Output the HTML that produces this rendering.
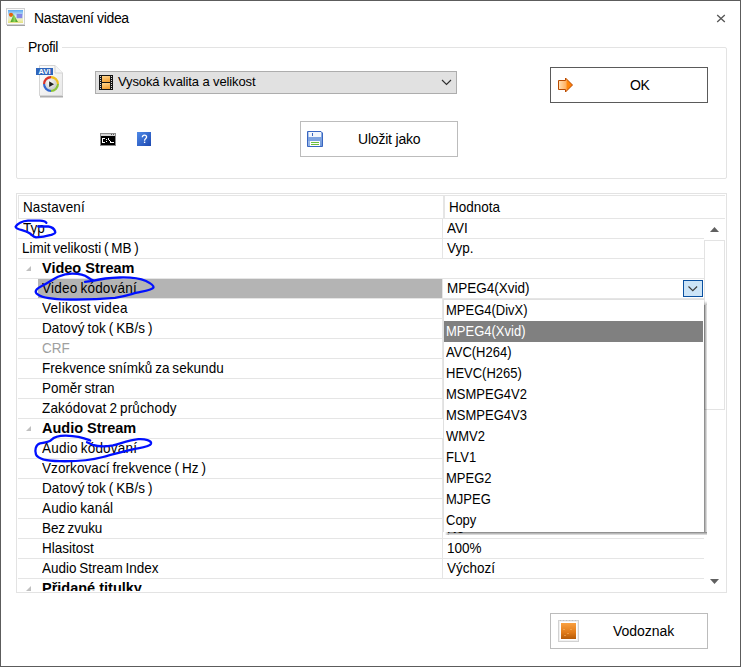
<!DOCTYPE html>
<html><head><meta charset="utf-8">
<style>
*{margin:0;padding:0;box-sizing:border-box}
html,body{width:741px;height:667px;overflow:hidden;background:#fff}
body{position:relative;font-family:"Liberation Sans",sans-serif;font-size:13px;color:#000}
.a{position:absolute}
.t{position:absolute;white-space:pre;line-height:16px;height:16px}
.hl{position:absolute;height:1px;background:#e5e5e5}
.vl{position:absolute;width:1px;background:#e5e5e5}
.btn{position:absolute;border:1px solid #bcbcbc;background:#fff}
.g{font-size:13.5px;word-spacing:-1px;transform:scaleY(1.09);transform-origin:0 12.7px}
.gb{font-size:14.5px;font-weight:700}
.dd{transform:scaleY(1.09);transform-origin:0 12.5px}
</style></head><body>
<!-- window border -->
<div class="a" style="left:0;top:0;width:741px;height:667px;border:1px solid #5c5c5c"></div>

<!-- title icon -->
<svg class="a" style="left:6px;top:8px" width="20" height="19" viewBox="0 0 20 19">
  <defs>
    <linearGradient id="sky" x1="0" y1="0" x2="0" y2="1"><stop offset="0" stop-color="#5aa8f0"/><stop offset="0.45" stop-color="#d8ecf6"/><stop offset="0.75" stop-color="#eef0b8"/><stop offset="1" stop-color="#e4e080"/></linearGradient>
    <linearGradient id="mt" x1="0" y1="0" x2="1" y2="0"><stop offset="0" stop-color="#3c9a1c"/><stop offset="0.55" stop-color="#8ed45a"/><stop offset="1" stop-color="#2e8812"/></linearGradient>
  </defs>
  <rect x="1" y="16" width="18" height="2" fill="#8c8c8c" opacity="0.8"/>
  <rect x="0.5" y="0.5" width="18" height="16" fill="#fafafa" stroke="#d0d0d0"/>
  <rect x="2" y="2" width="15" height="13" fill="url(#sky)"/>
  <rect x="10.6" y="5.9" width="5.7" height="4.3" fill="#7c7ce6" opacity="0.9"/>
  <circle cx="5" cy="6.8" r="2.1" fill="#e2620c"/>
  <path d="M4.5 14 L7.7 5.9 L11.8 14 Z" fill="url(#mt)"/>
</svg>
<div class="t" style="left:34px;top:10px;font-size:14px;letter-spacing:-0.38px">Nastavení videa</div>

<!-- close -->
<svg class="a" style="left:716px;top:14px" width="10" height="9" viewBox="0 0 10 9">
  <path d="M1.2 1 L8.8 8 M8.8 1 L1.2 8" stroke="#555" stroke-width="1.3"/>
</svg>

<!-- group box -->
<div class="a" style="left:16px;top:47px;width:711px;height:132px;border:1px solid #e3e3e3;border-radius:2px"></div>
<div class="a" style="left:24px;top:40px;width:38px;height:14px;background:#fff"></div>
<div class="t" style="left:28px;top:39px;font-size:14px;letter-spacing:-0.3px">Profil</div>

<!-- AVI icon -->
<svg class="a" style="left:35px;top:64px" width="30" height="34" viewBox="0 0 30 34">
  <defs>
    <linearGradient id="pg" x1="0" y1="0" x2="1" y2="1"><stop offset="0" stop-color="#fdfdfd"/><stop offset="1" stop-color="#e8e8e8"/></linearGradient>
    <radialGradient id="cc" cx="0.4" cy="0.35" r="0.7"><stop offset="0" stop-color="#ffffff"/><stop offset="1" stop-color="#c4c4c4"/></radialGradient>
  </defs>
  <rect x="5" y="31.5" width="23" height="2" fill="#9a9a9a" opacity="0.8"/>
  <path d="M4.5 1.5 H20 L27.5 9 V31.5 H4.5 Z" fill="url(#pg)" stroke="#d4d4d4"/>
  <path d="M20 1.5 V9 H27.5" fill="#f6f6f6" stroke="#d4d4d4"/>
  <rect x="1" y="4" width="17" height="7" fill="#2f66bc"/>
  <text x="9.5" y="10.3" font-family="Liberation Sans" font-weight="700" font-size="7.5" fill="#fff" text-anchor="middle">AVI</text>
  <circle cx="16" cy="20" r="6.8" fill="none" stroke="#d8322a" stroke-width="2.4" stroke-dasharray="10.68 32.05" transform="rotate(180 16 20)"/>
  <circle cx="16" cy="20" r="6.8" fill="none" stroke="#f0c020" stroke-width="2.4" stroke-dasharray="10.68 32.05" transform="rotate(270 16 20)"/>
  <circle cx="16" cy="20" r="6.8" fill="none" stroke="#8cc43a" stroke-width="2.4" stroke-dasharray="10.68 32.05" transform="rotate(0 16 20)"/>
  <circle cx="16" cy="20" r="6.8" fill="none" stroke="#3266d0" stroke-width="2.4" stroke-dasharray="10.68 32.05" transform="rotate(90 16 20)"/>
  <circle cx="16" cy="20" r="5.6" fill="url(#cc)"/>
  <path d="M14.2 17.3 L19 20.2 L14.2 23 Z" fill="#1e1e1e"/>
</svg>

<!-- combo -->
<div class="a" style="left:95px;top:71px;width:362px;height:23px;background:#e1e1e1;border:1px solid #adadad"></div>
<svg class="a" style="left:99px;top:75px" width="14" height="15" viewBox="0 0 14 15" shape-rendering="crispEdges">
  <defs><linearGradient id="fr" x1="0" y1="0" x2="0.3" y2="1"><stop offset="0" stop-color="#ffd690"/><stop offset="1" stop-color="#f0a23a"/></linearGradient></defs>
  <rect x="0" y="0" width="14" height="15" fill="#151515"/>
  <rect x="3" y="1" width="8" height="6" fill="url(#fr)"/>
  <rect x="3" y="8" width="8" height="6" fill="url(#fr)"/>
  <g fill="#d8d8d8"><rect x="1" y="1" width="1" height="1"/><rect x="1" y="3" width="1" height="1"/><rect x="1" y="5" width="1" height="1"/><rect x="1" y="7" width="1" height="1"/><rect x="1" y="9" width="1" height="1"/><rect x="1" y="11" width="1" height="1"/><rect x="1" y="13" width="1" height="1"/>
  <rect x="12" y="1" width="1" height="1"/><rect x="12" y="3" width="1" height="1"/><rect x="12" y="5" width="1" height="1"/><rect x="12" y="7" width="1" height="1"/><rect x="12" y="9" width="1" height="1"/><rect x="12" y="11" width="1" height="1"/><rect x="12" y="13" width="1" height="1"/></g>
</svg>
<div class="t" style="left:118px;top:74px;letter-spacing:-0.12px">Vysoká kvalita a velikost</div>
<svg class="a" style="left:440px;top:78px" width="12" height="9" viewBox="0 0 12 9"><path d="M2 2 L6.5 6.5 L11 2" fill="none" stroke="#2e2e2e" stroke-width="1.15"/></svg>

<!-- cmd icon -->
<svg class="a" style="left:100px;top:133px" width="16" height="13" viewBox="0 0 16 13" shape-rendering="crispEdges">
  <rect x="0" y="0" width="16" height="13" fill="#8c8c8c"/>
  <rect x="1" y="1" width="14" height="2" fill="#d4d4d4"/>
  <rect x="11" y="1" width="1" height="1" fill="#555"/><rect x="12" y="1" width="1" height="1" fill="#d4d4d4"/><rect x="13" y="1" width="1" height="1" fill="#555"/>
  <rect x="1" y="3" width="14" height="9" fill="#000"/>
  <g fill="#fff">
  <rect x="2" y="5" width="3" height="1"/><rect x="2" y="6" width="1" height="3"/><rect x="2" y="9" width="3" height="1"/>
  <rect x="6" y="6" width="1" height="1"/><rect x="6" y="8" width="1" height="1"/>
  <rect x="8" y="5" width="1" height="2"/><rect x="9" y="7" width="1" height="1"/><rect x="10" y="8" width="1" height="2"/>
  <rect x="11" y="9" width="3" height="1"/>
  </g>
</svg>
<!-- help icon -->
<svg class="a" style="left:137px;top:132px" width="14" height="14" viewBox="0 0 14 14">
  <defs><linearGradient id="hb" x1="0" y1="0" x2="1" y2="1"><stop offset="0" stop-color="#4f8ae8"/><stop offset="1" stop-color="#1c48b0"/></linearGradient></defs>
  <rect x="0" y="0" width="14" height="14" fill="url(#hb)"/>
  <path d="M5.3 5.3 C5.3 3.9, 6.3 3.1, 7.4 3.1 C8.6 3.1, 9.6 3.9, 9.6 5.1 C9.6 6.4, 7.8 6.8, 7.6 8 L7.6 8.7" fill="none" stroke="#fff" stroke-width="1.3"/><rect x="6.9" y="9.6" width="1.4" height="1.4" fill="#fff"/>
</svg>

<!-- OK button -->
<div class="a" style="left:550px;top:67px;width:158px;height:36px;border:1px solid #5a5a5a;background:#fff"></div>
<svg class="a" style="left:557px;top:77px" width="17" height="16" viewBox="0 0 17 16">
  <defs><linearGradient id="ar" x1="0" y1="0" x2="1" y2="0"><stop offset="0" stop-color="#ffe2b8"/><stop offset="0.55" stop-color="#ffb060"/><stop offset="0.6" stop-color="#ff8a10"/><stop offset="1" stop-color="#ff7a00"/></linearGradient></defs>
  <path d="M1.5 3.5 H8.5 V1 L15.5 8 L8.5 15 V12.5 H1.5 Z" fill="url(#ar)" stroke="#b84a00" stroke-width="1"/>
</svg>
<div class="t" style="left:630px;top:77px;font-size:14px;letter-spacing:-0.5px">OK</div>

<!-- Ulozit jako -->
<div class="btn" style="left:300px;top:121px;width:158px;height:36px"></div>
<svg class="a" style="left:307px;top:131px" width="16" height="16" viewBox="0 0 16 16" shape-rendering="crispEdges">
  <defs><linearGradient id="fl" x1="0" y1="0" x2="1" y2="1"><stop offset="0" stop-color="#b8cff2"/><stop offset="1" stop-color="#6a94d8"/></linearGradient></defs>
  <path d="M0.5 0.5 H14 L15.5 2 V15.5 H0.5 Z" fill="url(#fl)" stroke="#3a66c0" shape-rendering="auto"/>
  <rect x="2" y="1" width="12" height="5" fill="#f2f6fc"/>
  <rect x="5" y="2" width="1" height="3" fill="#3a66c0"/>
  <rect x="1" y="6" width="14" height="4" fill="#7ea3e0"/>
  <rect x="3" y="10" width="10" height="5" fill="#fdfdfd"/>
  <rect x="4" y="11" width="8" height="1" fill="#6cbf3c"/>
  <rect x="4" y="13" width="8" height="1" fill="#6cbf3c"/>
</svg>
<div class="t" style="left:358px;top:131px;font-size:14px;letter-spacing:-0.2px">Uložit jako</div>

<!-- Vodoznak -->
<div class="btn" style="left:550px;top:613px;width:158px;height:36px"></div>
<svg class="a" style="left:558px;top:620px" width="21" height="22" viewBox="0 0 21 22">
  <defs><linearGradient id="vg" x1="0" y1="0" x2="0" y2="1"><stop offset="0" stop-color="#f9a040"/><stop offset="0.6" stop-color="#e07a18"/><stop offset="1" stop-color="#b45a08"/></linearGradient></defs>
  <rect x="0" y="0" width="21" height="22" fill="#d2d2d2"/>
  <rect x="1" y="1" width="19" height="20" fill="#f0f0f0"/>
  <g fill="#bdbdbd"><rect x="2" y="0" width="1" height="1"/><rect x="5" y="0" width="1" height="1"/><rect x="8" y="0" width="1" height="1"/><rect x="11" y="0" width="1" height="1"/><rect x="14" y="0" width="1" height="1"/><rect x="17" y="0" width="1" height="1"/></g>
  <rect x="2" y="2" width="17" height="18" fill="#ffffff"/>
  <rect x="3" y="3" width="15" height="16" fill="url(#vg)"/>
  <g fill="#f7b060" opacity="0.6"><rect x="5" y="9" width="2" height="1"/><rect x="12" y="9" width="2" height="1"/><rect x="9" y="13" width="2" height="1"/><rect x="6" y="15" width="2" height="1"/></g>
</svg>
<div class="t" style="left:613px;top:623px;font-size:14px;letter-spacing:-0.05px">Vodoznak</div>

<!-- property grid -->
<div class="a" style="left:16px;top:193px;width:711px;height:400px;border:1px solid #e3e3e3"></div>
<!--GRID-->
<div class="hl" style="left:18px;top:195px;width:707px"></div>
<div class="hl" style="left:18px;top:218px;width:707px"></div>
<div class="vl" style="left:18px;top:195px;height:24px"></div>
<div class="vl" style="left:443px;top:195px;height:23px;width:2px"></div>
<div class="t g" style="left:23px;top:200px;letter-spacing:0.12px">Nastavení</div>
<div class="t g" style="left:449px;top:200px">Hodnota</div>
<div class="a" style="left:18px;top:219px;width:707px;height:372px;overflow:hidden">
<div class="t g" style="left:5px;top:2px">Typ</div>
<div class="vl" style="left:424px;top:0px;height:19px"></div>
<div class="t g" style="left:429px;top:2px">AVI</div>
<div class="hl" style="left:0;top:19px;width:686px"></div>
<div class="t g" style="left:4px;top:22px">Limit velikosti ( MB )</div>
<div class="vl" style="left:424px;top:20px;height:19px"></div>
<div class="t g" style="left:429px;top:22px">Vyp.</div>
<div class="hl" style="left:0;top:39px;width:686px"></div>
<svg class="a" style="left:8px;top:47px" width="6" height="6" viewBox="0 0 6 6"><path d="M0 5 L5 0 L5 5 Z" fill="#c0c0c0"/></svg>
<div class="t gb" style="left:24px;top:41px">Video Stream</div>
<div class="hl" style="left:0;top:59px;width:686px"></div>
<div class="a" style="left:20px;top:60px;width:404px;height:19px;background:#b4b4b4"></div>
<div class="t g" style="left:24px;top:62px;letter-spacing:0.23px">Video kódování</div>
<div class="vl" style="left:424px;top:60px;height:19px"></div>
<div class="t g" style="left:429px;top:62px">MPEG4(Xvid)</div>
<div class="hl" style="left:0;top:79px;width:686px"></div>
<div class="t g" style="left:24px;top:82px;letter-spacing:0.3px">Velikost videa</div>
<div class="vl" style="left:424px;top:80px;height:19px"></div>
<div class="hl" style="left:0;top:99px;width:686px"></div>
<div class="t g" style="left:24px;top:102px;letter-spacing:0.11px">Datový tok ( KB/s )</div>
<div class="vl" style="left:424px;top:100px;height:19px"></div>
<div class="hl" style="left:0;top:119px;width:686px"></div>
<div class="t g" style="left:24px;top:122px;color:#a0a0a0">CRF</div>
<div class="vl" style="left:424px;top:120px;height:19px"></div>
<div class="hl" style="left:0;top:139px;width:686px"></div>
<div class="t g" style="left:24px;top:142px;letter-spacing:0.065px">Frekvence snímků za sekundu</div>
<div class="vl" style="left:424px;top:140px;height:19px"></div>
<div class="hl" style="left:0;top:159px;width:686px"></div>
<div class="t g" style="left:24px;top:162px">Poměr stran</div>
<div class="vl" style="left:424px;top:160px;height:19px"></div>
<div class="hl" style="left:0;top:179px;width:686px"></div>
<div class="t g" style="left:24px;top:182px;letter-spacing:0.16px">Zakódovat 2 průchody</div>
<div class="vl" style="left:424px;top:180px;height:19px"></div>
<div class="hl" style="left:0;top:199px;width:686px"></div>
<svg class="a" style="left:8px;top:207px" width="6" height="6" viewBox="0 0 6 6"><path d="M0 5 L5 0 L5 5 Z" fill="#c0c0c0"/></svg>
<div class="t gb" style="left:24px;top:201px">Audio Stream</div>
<div class="hl" style="left:0;top:219px;width:686px"></div>
<div class="t g" style="left:24px;top:222px;letter-spacing:0.23px">Audio kódování</div>
<div class="vl" style="left:424px;top:220px;height:19px"></div>
<div class="hl" style="left:0;top:239px;width:686px"></div>
<div class="t g" style="left:24px;top:242px;letter-spacing:0.08px">Vzorkovací frekvence ( Hz )</div>
<div class="vl" style="left:424px;top:240px;height:19px"></div>
<div class="hl" style="left:0;top:259px;width:686px"></div>
<div class="t g" style="left:24px;top:262px;letter-spacing:0.11px">Datový tok ( KB/s )</div>
<div class="vl" style="left:424px;top:260px;height:19px"></div>
<div class="hl" style="left:0;top:279px;width:686px"></div>
<div class="t g" style="left:24px;top:282px;letter-spacing:0.15px">Audio kanál</div>
<div class="vl" style="left:424px;top:280px;height:19px"></div>
<div class="hl" style="left:0;top:299px;width:686px"></div>
<div class="t g" style="left:24px;top:302px;letter-spacing:-0.12px">Bez zvuku</div>
<div class="vl" style="left:424px;top:300px;height:19px"></div>
<div class="t g" style="left:429px;top:302px">Ne</div>
<div class="hl" style="left:0;top:319px;width:686px"></div>
<div class="t g" style="left:24px;top:322px">Hlasitost</div>
<div class="vl" style="left:424px;top:320px;height:19px"></div>
<div class="t g" style="left:429px;top:322px">100%</div>
<div class="hl" style="left:0;top:339px;width:686px"></div>
<div class="t g" style="left:24px;top:342px">Audio Stream Index</div>
<div class="vl" style="left:424px;top:340px;height:19px"></div>
<div class="t g" style="left:429px;top:342px">Výchozí</div>
<div class="hl" style="left:0;top:359px;width:686px"></div>
<svg class="a" style="left:8px;top:367px" width="6" height="6" viewBox="0 0 6 6"><path d="M0 5 L5 0 L5 5 Z" fill="#c0c0c0"/></svg>
<div class="t gb" style="left:24px;top:361px">Přidané titulky</div>
<div class="hl" style="left:0;top:379px;width:686px"></div>
</div>
<!--/GRID-->

<!--DROP-->
<!-- scrollbar -->
<svg class="a" style="left:709px;top:226px" width="11" height="7" viewBox="0 0 11 7"><path d="M1 6 L5.5 1 L10 6 Z" fill="#606060"/></svg>
<div class="a" style="left:704px;top:240px;width:21px;height:170px;border:1px solid #e3e3e3;background:#fff"></div>
<svg class="a" style="left:709px;top:578px" width="11" height="7" viewBox="0 0 11 7"><path d="M1 1 L5.5 6 L10 1 Z" fill="#606060"/></svg>
<!-- combo btn in row -->
<div class="a" style="left:683px;top:280px;width:20px;height:17px;border:1px solid #0a50a0;background:#cce4f7"></div>
<svg class="a" style="left:687px;top:284px" width="12" height="9" viewBox="0 0 12 9"><path d="M1.5 2.5 L5.8 6.6 L10.1 2.5" fill="none" stroke="#3a3a3a" stroke-width="1.15"/></svg>
<!-- dropdown -->
<div class="a" style="left:704px;top:305px;width:3px;height:227px;background:linear-gradient(to right,rgba(0,0,0,.5),rgba(0,0,0,.28) 50%,rgba(0,0,0,.09))"></div>
<div class="a" style="left:704px;top:301px;width:3px;height:4px;background:linear-gradient(to bottom,rgba(255,255,255,0),rgba(128,128,128,0.5))"></div>
<div class="a" style="left:449px;top:532px;width:258px;height:3px;background:linear-gradient(to bottom,rgba(0,0,0,.5),rgba(0,0,0,.28) 50%,rgba(0,0,0,.09))"></div>
<div class="a" style="left:445px;top:532px;width:4px;height:3px;background:linear-gradient(to right,rgba(0,0,0,0),rgba(0,0,0,.35))"></div>
<div class="a" style="left:443px;top:299px;width:261px;height:233px;border:1px solid #e0e0e0;border-right:none;border-bottom:none;background:#fff"></div>
<div class="a" style="left:444px;top:321px;width:259px;height:21px;background:#808080"></div>
<div class="t dd" style="left:446px;top:303px;color:#000">MPEG4(DivX)</div>
<div class="t dd" style="left:446px;top:324px;color:#fff">MPEG4(Xvid)</div>
<div class="t dd" style="left:446px;top:345px;color:#000">AVC(H264)</div>
<div class="t dd" style="left:446px;top:366px;color:#000">HEVC(H265)</div>
<div class="t dd" style="left:446px;top:387px;color:#000">MSMPEG4V2</div>
<div class="t dd" style="left:446px;top:408px;color:#000">MSMPEG4V3</div>
<div class="t dd" style="left:446px;top:429px;color:#000">WMV2</div>
<div class="t dd" style="left:446px;top:450px;color:#000">FLV1</div>
<div class="t dd" style="left:446px;top:471px;color:#000">MPEG2</div>
<div class="t dd" style="left:446px;top:492px;color:#000">MJPEG</div>
<div class="t dd" style="left:446px;top:513px;color:#000">Copy</div>
<!--/DROP-->
<!--ANN-->
<svg class="a" style="left:0;top:0" width="741" height="667" viewBox="0 0 741 667">
<g fill="none" stroke="#0010ff" stroke-width="2.3" stroke-linecap="round" stroke-linejoin="round">
<path d="M46.4 222.8 C45.5 221.5, 43 220.7, 40 220.7 L28 220.7 C22 221, 17 224, 15.6 226.8 C15.6 228, 19 229.5, 22 230.2 C25 231, 28 232, 30 233.5 C32 235, 33.5 237, 36 237.3 C40 237.3, 47 236.2, 51 234.9 C53.5 234, 56 233.5, 55.2 231.5 C54.5 229.5, 52 227, 48.4 226.5 L38.3 226.5"/>
<path d="M85 281.8 L94 280.6 C100 279, 110 277.8, 120 277.5 C128 277.3, 138 277.6, 146 281 C150 283, 154 285.5, 153.5 287.5 C152.5 290, 145 291, 137 292.6 C131 294, 127 296, 115 297.8 C100 299.2, 80 299.8, 62 299.3 C48 298.8, 40 297, 36.5 293.5 C34 290.5, 38 287.8, 42.2 285.8 C48 283, 53 279, 58 276.8 C63 274.6, 68 273.6, 72 273.6 C78 273.5, 84 274.5, 88 277.5 C90 279, 92 280.2, 94 280.6"/>
<path d="M90.2 440.5 C86 438.8, 80 436, 66 435.6 C58 435.5, 54 436.8, 51.5 439.8 C50 441.8, 46 442.6, 40 443.4 C35.5 444.8, 34.5 450.5, 36 454.5 C38 459, 45 461, 60 461.2 C75 461.5, 90 460.5, 103 457 C115 454, 125 451, 135 448.8 C142 447.5, 150 446.5, 151 443.8 C152 440.5, 145 438.8, 138.4 439.2 C131 439.7, 124 442.3, 113 445.4 C105 446.8, 97 446.2, 92.6 444.8 L87 442.3"/>
</g></svg>
<!--/ANN-->
</body></html>
